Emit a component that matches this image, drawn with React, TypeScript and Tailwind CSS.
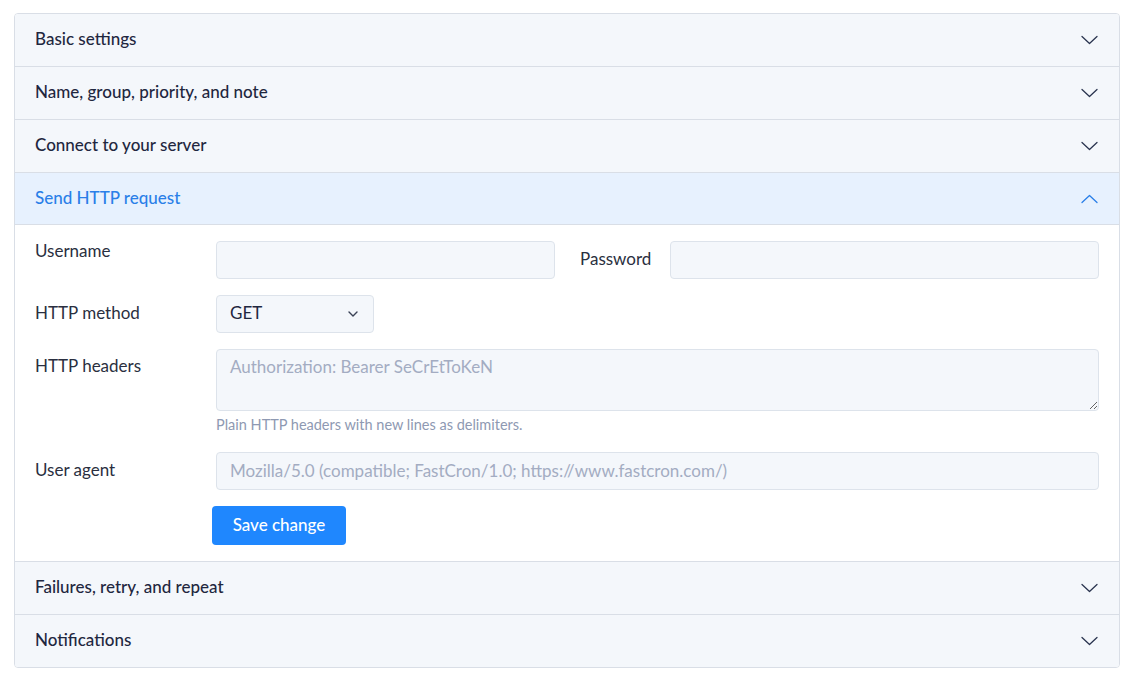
import React from "react";

const Chevron = ({ up = false, className = "" }: { up?: boolean; className?: string }) => (
  <svg width="17" height="10" viewBox="0 0 17 10" fill="none" className={className}>
    <path
      d={up ? "M1 8.5 L8.5 1.5 L16 8.5" : "M1 1.5 L8.5 8.5 L16 1.5"}
      stroke="currentColor"
      strokeWidth="1.3"
      strokeLinecap="round"
      strokeLinejoin="round"
    />
  </svg>
);

const Header = ({ title, open = false, last = false }: { title: string; open?: boolean; last?: boolean }) => (
  <div
    className={
      "flex items-center justify-between pl-5 pr-[21px] " +
      (last ? "h-[52px] " : open ? "h-[52px] border-b border-[#d9dee6] " : "h-[53px] border-b border-[#d9dee6] ") +
      (open ? "bg-[#e7f1fe] text-[#2a7fe8]" : "bg-[#f4f7fb] text-[#1f2740]")
    }
  >
    <span className="pb-[2px] text-[17px] font-medium">{title}</span>
    <Chevron up={open} className={open ? "text-[#2a7fe8]" : "text-[#2b3550]"} />
  </div>
);

const inputCls =
  "h-[38px] rounded-[4px] border border-[#dde3eb] bg-[#f4f7fb] px-[13px] text-[17px] text-[#1f2740] placeholder:text-[#a3acc2] outline-none";

export default function App() {
  return (
    <div
      className="min-h-[675px] bg-white pl-[14px] pr-[11px] pt-[13px]"
      style={{ fontFamily: "Lato, 'Open Sans', sans-serif" }}
    >
      <div className="overflow-hidden rounded-[4px] border border-[#d9dee6]">
        <Header title="Basic settings" />
        <Header title="Name, group, priority, and note" />
        <Header title="Connect to your server" />
        <Header title="Send HTTP request" open />
        <div className="flex flex-col gap-4 border-b border-[#d9dee6] bg-white px-5 pt-4 pb-4 text-[17px] text-[#2a2f40]">
          <div className="flex">
            <div className="w-[181px] shrink-0 leading-[20px]">Username</div>
            <input className={inputCls + " w-[339px]"} />
            <div className="flex w-[115px] items-center pl-[25px] pb-[3px]">Password</div>
            <input className={inputCls + " flex-1 min-w-0"} />
          </div>
          <div className="flex items-center">
            <div className="w-[181px] shrink-0 pb-[2px]">HTTP method</div>
            <div className="flex h-[38px] w-[158px] items-center justify-between rounded-[4px] border border-[#dde3eb] bg-[#f4f7fb] pl-[13px] pr-[15px] text-[#1f2740]">
              <span className="pb-[2px]">GET</span>
              <svg width="10" height="6" viewBox="0 0 10 6" fill="none">
                <path d="M1 1 L5 5 L9 1" stroke="#3a4256" strokeWidth="1.4" strokeLinecap="round" strokeLinejoin="round" />
              </svg>
            </div>
          </div>
          <div className="flex">
            <div className="w-[181px] shrink-0 pt-[4px]">HTTP headers</div>
            <div className="flex flex-1 flex-col">
              <textarea
                className="h-[62px] w-full resize-y rounded-[4px] border border-[#dde3eb] bg-[#f4f7fb] px-[13px] py-[4px] text-[17px] placeholder:text-[#a3acc2] outline-none"
                placeholder="Authorization: Bearer SeCrEtToKeN"
              />
              <div className="mt-[5px] h-[20px] text-[14.5px] leading-[18px] text-[#8e99b2]">
                Plain HTTP headers with new lines as delimiters.
              </div>
            </div>
          </div>
          <div className="flex items-center">
            <div className="w-[181px] shrink-0 pb-[2px]">User agent</div>
            <input
              className={inputCls + " flex-1 min-w-0 pb-[2px]"}
              placeholder="Mozilla/5.0 (compatible; FastCron/1.0; https://www.fastcron.com/)"
            />
          </div>
          <div className="flex pl-[177px]">
            <button className="h-[39px] w-[134px] rounded-[4px] bg-[#1f87fe] pb-[2px] text-[17px] font-medium text-white">
              Save change
            </button>
          </div>
        </div>
        <Header title="Failures, retry, and repeat" />
        <Header title="Notifications" last />
      </div>
    </div>
  );
}
